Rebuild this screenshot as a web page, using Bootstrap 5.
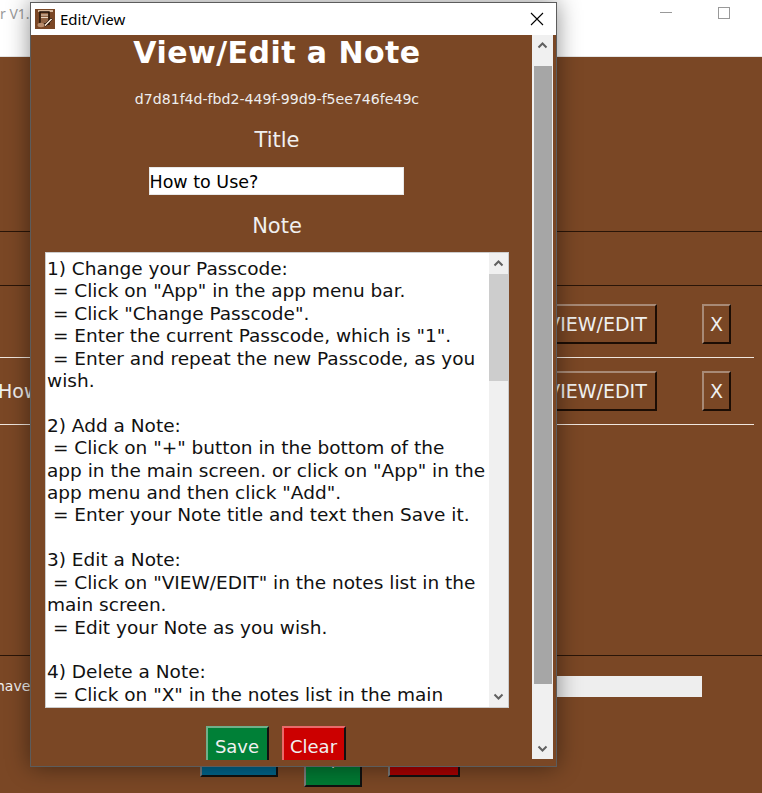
<!DOCTYPE html>
<html lang="en">
<head>
    <meta charset="UTF-8">
    <meta name="viewport" content="width=device-width, initial-scale=1.0">
    <title>Edit/View</title>
    <link href="https://cdn.jsdelivr.net/npm/bootstrap@5.3.0/dist/css/bootstrap.min.css" rel="stylesheet">
    <style>
        html, body { height: 100%; }
        body { background: #7a4725; font-family: "DejaVu Sans", sans-serif; overflow: hidden; color: #f0f0f0; }
        .desk { width: 762px; height: 793px; position: relative; overflow: hidden; }

        /* main window behind */
        .main-title { height: 57px; background: #fff; border-bottom: 1px solid #e6e6e6; color: #9a9a9a; font-family: "Noto Sans", sans-serif; font-size: 14px; padding-top: 3px; }
        .win-min { position: absolute; left: 660px; top: 12px; width: 12px; height: 1px; background: #999; }
        .win-max { position: absolute; left: 718px; top: 7px; width: 12px; height: 12px; border: 1px solid #999; }
        .main-head { height: 175px; border-bottom: 1px solid #2a1508; }
        .main-sub { height: 54px; border-bottom: 1px solid #2a1508; }
        .note-row { width: 754px; border-bottom: 1px solid #f0e6de; padding-right: 23px; font-size: 19px; }
        .note-row-a { height: 72px; padding-top: 18px; }
        .note-row-b { height: 67px; padding-top: 13px; }
        .note-name { flex: 1; line-height: 40px; margin-left: -2px; }
        .tk-btn { border: 2px solid; border-color: #a88a76 #1c0d04 #1c0d04 #a88a76; background: #7a4725; color: #f0f0f0; font-size: 19px; padding: 0; height: 40px; line-height: 36px; text-align: center; }
        .btn-view { width: 120px; margin-right: 45px; }
        .btn-del { width: 29px; }
        .main-list { height: 231px; border-bottom: 1px solid #2a1508; }
        .main-foot { padding-top: 20px; }
        .have-txt { font-size: 14px; line-height: 21px; width: 120px; margin-left: -4px; flex: none; }
        .have-box { width: 582px; height: 21px; margin-left: 4px; background: #eee; }
        .foot-btns { padding-left: 200px; gap: 26px; margin-top: 40px; }
        .foot-btn { border: 2px solid; border-color: #7a7a7a #111 #111 #7a7a7a; }
        .foot-blue { width: 78px; height: 40px; background: #00648a; }
        .foot-green { width: 58px; height: 50px; background: #007a33; color: #ddd; font-size: 18px; line-height: 46px; }
        .foot-red { width: 72px; height: 40px; background: #a80000; }

        /* edit dialog on top */
        .dlg { position: absolute; left: 30px; top: 2px; width: 527px; height: 765px; background: #7a4725; border: 1px solid #5c5c5c; box-shadow: 0 0 22px rgba(0,0,0,.45); }
        .dlg-title { height: 32px; background: #fff; color: #000; font-family: "Noto Sans", sans-serif; font-size: 15px; padding-left: 4px; gap: 5px; }
        .dlg-close { margin-left: auto; margin-right: 12px; line-height: 0; }
        .dlg-body { height: 731px; }
        .dlg-col { width: 491px; padding: 1px 13px 0 14px; text-align: center; flex: none; }
        .view-head { font-size: 30px; font-weight: 700; line-height: 34px; color: #fff; margin: 0; letter-spacing: .45px; }
        .note-id { font-size: 14.1px; line-height: 20px; margin-top: 19px; color: #eee; }
        .field-lbl { font-size: 21px; line-height: 24px; color: #f0f0f0; }
        .lbl-title { margin-top: 19px; }
        .lbl-note { margin-top: 19px; }
        .title-box { display: block; width: 255px; height: 28px; margin: 15px auto 0; transform: translateX(-1px); border: 1px solid #e8e8e8; background: #fff; font-size: 17.5px; line-height: 28px; color: #000; text-align: left; padding: 0; }
        .note-box { width: 464px; height: 456px; margin-top: 14px; background: #fff; border: 1px solid #ccc; text-align: left; overflow: hidden; }
        .note-text { flex: 1; padding: 5px 0 0 1px; font-size: 18.5px; line-height: 22.4px; color: #111; white-space: pre; overflow: hidden; }
        .scroll-track { flex: none; background: #f0f0f0; }
        .scroll-inner { width: 19px; }
        .scroll-arrow { height: 21px; line-height: 0; }
        .scroll-thumb-in { height: 107px; background: #cdcdcd; }
        .scroll-outer { width: 21px; height: 724px; margin-left: 10px; }
        .scroll-thumb-out { height: 618px; background: #a6a6a6; margin: 10px 1px 0 2px; }
        .dlg-btns { margin-top: 18px; gap: 13px; padding-right: 3px; }
        .dlg-btn { height: 34px; border: 2px solid; border-bottom: 0; color: #f0f0f0; font-size: 18px; line-height: 37px; padding: 0; overflow: hidden; }
        .dlg-save { width: 63px; background: #008037; border-color: #6fb08a #111 #111 #6fb08a; }
        .dlg-clear { width: 64px; background: #cc0000; border-color: #e96a6a #111 #111 #e96a6a; }
    </style>
</head>
<body>
<div class="desk">
    <div class="main-title">r V1.</div>
    <div class="win-min"></div>
    <div class="win-max"></div>
    <div class="main-head"></div>
    <div class="main-sub"></div>
    <div class="note-row note-row-a d-flex">
        <div class="note-name"></div>
        <button class="tk-btn btn-view">VIEW/EDIT</button>
        <button class="tk-btn btn-del">X</button>
    </div>
    <div class="note-row note-row-b d-flex">
        <div class="note-name">How</div>
        <button class="tk-btn btn-view">VIEW/EDIT</button>
        <button class="tk-btn btn-del">X</button>
    </div>
    <div class="main-list"></div>
    <div class="main-foot">
        <div class="d-flex">
            <div class="have-txt">have</div>
            <div class="have-box"></div>
        </div>
        <div class="d-flex foot-btns align-items-start">
            <div class="foot-btn foot-blue"></div>
            <div class="foot-btn foot-green text-center">+</div>
            <div class="foot-btn foot-red"></div>
        </div>
    </div>

    <div class="dlg">
        <div class="dlg-title d-flex align-items-center">
            <svg width="20" height="20" viewBox="0 0 20 20">
                <rect width="20" height="20" fill="#7a4725"/>
                <rect x="3" y="1" width="15" height="2" fill="#d9b99c"/>
                <path d="M5 3h9v12H5z" fill="#8f6242" stroke="#1c0d04" stroke-width="1.4"/>
                <path d="M6 6h7M6 8.5h7" stroke="#e8d4c0" stroke-width="1"/>
                <path d="M9 16l7-7 1.5 1.5-7 7z" fill="#e8d4c0" stroke="#1c0d04" stroke-width=".7"/>
                <ellipse cx="6" cy="16" rx="3.5" ry="2.2" fill="#b98d6c"/>
            </svg>
            <span>Edit/View</span>
            <span class="dlg-close">
                <svg width="14" height="14" viewBox="0 0 14 14"><path d="M1 1l12 12M13 1L1 13" stroke="#000" stroke-width="1.1" fill="none"/></svg>
            </span>
        </div>
        <div class="dlg-body d-flex">
            <div class="dlg-col">
                <h1 class="view-head">View/Edit a Note</h1>
                <div class="note-id">d7d81f4d-fbd2-449f-99d9-f5ee746fe49c</div>
                <div class="field-lbl lbl-title">Title</div>
                <div class="title-box">How to Use?</div>
                <div class="field-lbl lbl-note">Note</div>
                <div class="note-box d-flex">
                    <div class="note-text">1) Change your Passcode:
 = Click on "App" in the app menu bar.
 = Click "Change Passcode".
 = Enter the current Passcode, which is "1".
 = Enter and repeat the new Passcode, as you
wish.

2) Add a Note:
 = Click on "+" button in the bottom of the
app in the main screen. or click on "App" in the
app menu and then click "Add".
 = Enter your Note title and text then Save it.

3) Edit a Note:
 = Click on "VIEW/EDIT" in the notes list in the
main screen.
 = Edit your Note as you wish.

4) Delete a Note:
 = Click on "X" in the notes list in the main</div>
                    <div class="scroll-track scroll-inner d-flex flex-column">
                        <div class="scroll-arrow text-center"><svg width="11" height="21" viewBox="0 0 11 21"><path d="M1.5 12.5l4-4 4 4" stroke="#606060" stroke-width="2" fill="none"/></svg></div>
                        <div class="scroll-thumb-in"></div>
                        <div class="scroll-arrow text-center mt-auto"><svg width="11" height="21" viewBox="0 0 11 21"><path d="M1.5 8.5l4 4 4-4" stroke="#606060" stroke-width="2" fill="none"/></svg></div>
                    </div>
                </div>
                <div class="d-flex justify-content-center dlg-btns">
                    <button class="dlg-btn dlg-save">Save</button>
                    <button class="dlg-btn dlg-clear">Clear</button>
                </div>
            </div>
            <div class="scroll-track scroll-outer d-flex flex-column">
                <div class="scroll-arrow text-center"><svg width="11" height="21" viewBox="0 0 11 21"><path d="M1.5 12.5l4-4 4 4" stroke="#606060" stroke-width="2" fill="none"/></svg></div>
                <div class="scroll-thumb-out"></div>
                <div class="scroll-arrow text-center mt-auto"><svg width="11" height="21" viewBox="0 0 11 21"><path d="M1.5 8.5l4 4 4-4" stroke="#606060" stroke-width="2" fill="none"/></svg></div>
            </div>
        </div>
    </div>
</div>
<script src="https://cdn.jsdelivr.net/npm/bootstrap@5.3.0/dist/js/bootstrap.bundle.min.js"></script>
</body>
</html>
